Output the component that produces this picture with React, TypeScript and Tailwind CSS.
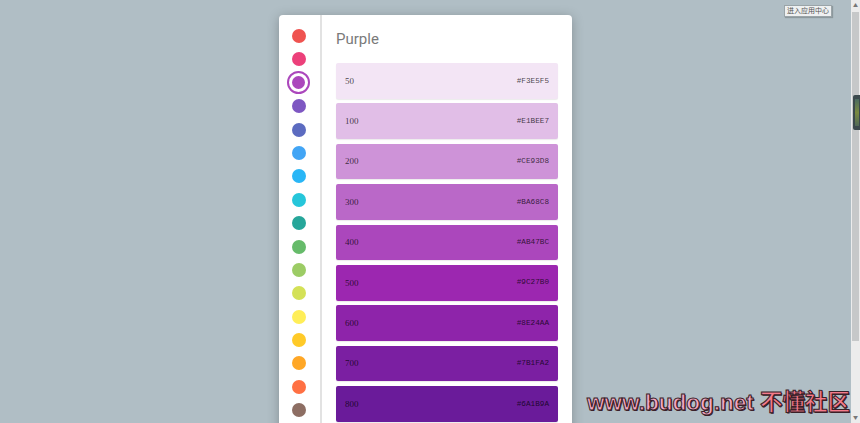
import React from "react";

const dots = [
  "#EF5350", "#EC407A", "#AB47BC", "#7E57C2", "#5C6BC0", "#42A5F5", "#29B6F6",
  "#26C6DA", "#26A69A", "#66BB6A", "#9CCC65", "#D4E157", "#FFEE58", "#FFCA28",
  "#FFA726", "#FF7043", "#8D6E63",
];

const swatches = [
  ["50", "#F3E5F5"],
  ["100", "#E1BEE7"],
  ["200", "#CE93D8"],
  ["300", "#BA68C8"],
  ["400", "#AB47BC"],
  ["500", "#9C27B0"],
  ["600", "#8E24AA"],
  ["700", "#7B1FA2"],
  ["800", "#6A1B9A"],
];

export default function App() {
  return (
    <div className="relative flex h-[423px] w-[860px] overflow-hidden bg-[#b0bec5]" style={{ fontFamily: "Roboto, 'Noto Sans CJK SC', sans-serif" }}>
      <div className="relative flex flex-1 justify-center pt-[15px]">
        <div className="flex h-[500px] w-[293px] rounded-[4px] bg-white shadow-[0_2px_12px_rgba(0,0,0,0.25)]">
          <div className="flex w-[43px] flex-col items-center border-r-2 border-[#e2e2e2] pr-[2px] pt-[9.3px]">
            {dots.map((c, i) => (
              <div key={i} className="flex h-[23.4px] w-full items-center justify-center">
                {i === 2 ? (
                  <div className="flex h-[23px] w-[23px] items-center justify-center rounded-full border-[2.5px] border-[#AB47BC] bg-white">
                    <div className="h-[13px] w-[13px] rounded-full" style={{ backgroundColor: c }} />
                  </div>
                ) : (
                  <div className="h-[14px] w-[14px] rounded-full" style={{ backgroundColor: c }} />
                )}
              </div>
            ))}
          </div>
          <div className="flex flex-1 flex-col px-[14px]">
            <div className="flex h-[48px] items-center text-[15px] text-[#7a7a7a]">Purple</div>
            <div className="flex flex-col gap-[4.8px]">
              {swatches.map(([n, hex]) => (
                <div
                  key={n}
                  className="flex h-[35.6px] items-center justify-between rounded-[2px] pl-[9px] pr-[9px] pt-[1px] text-[rgba(0,0,0,0.72)] shadow-[0_1px_1px_rgba(0,0,0,0.08)]"
                  style={{ backgroundColor: hex }}
                >
                  <span style={{ fontFamily: "'Liberation Serif', serif", fontSize: "9px" }}>{n}</span>
                  <span style={{ fontFamily: "'Liberation Mono', monospace", fontSize: "7.7px" }}>{hex}</span>
                </div>
              ))}
            </div>
          </div>
        </div>
        <div className="absolute right-[19px] top-[5px] border border-[#9aa4a8] bg-[#eef0f1] px-[2px] text-[7px] leading-[10px] text-[#555] shadow-[1px_1px_1px_rgba(0,0,0,0.2)]">
          进入应用中心
        </div>
      </div>
      <div className="relative flex w-[9px] flex-col bg-[#ececec]">
        <div className="flex h-[12px] items-center justify-center text-[5px] text-[#777]">▲</div>
        <div className="mx-[1px] h-[329px] bg-[#c6c8c9]" />
        <div className="flex-1" />
        <div className="flex h-[10px] items-center justify-center text-[5px] text-[#777]">▼</div>
        <div className="absolute left-[2px] top-[95px] h-[35px] w-[8px] rounded-l-[2px] bg-[#3c4a4e]">
          <div className="ml-[2px] mt-[4px] h-[27px] w-[4px] bg-[linear-gradient(#4a6a60,#7a8a40,#506a58)]" />
        </div>
      </div>
      <div
        className="absolute left-[587px] top-[389px] whitespace-nowrap text-[22.5px] font-bold leading-[28px] text-[#f6a8c2]"
        style={{
          fontFamily: "'Liberation Sans Narrow', 'Liberation Sans', 'Noto Sans CJK SC', sans-serif",
          WebkitTextStroke: "1px #3a2028",
          textShadow: "1px 1px 0 #3a2028",
        }}
      >
        www.budog.net <span className="text-[#f57a8a]">不懂社区</span>
      </div>
    </div>
  );
}
